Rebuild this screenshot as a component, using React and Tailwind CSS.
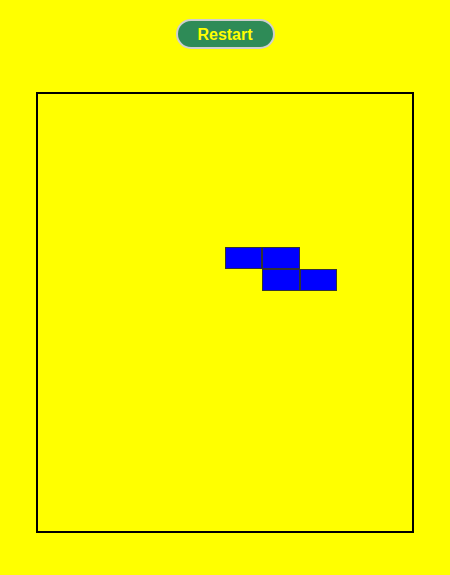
import React from "react";

const ROWS = 20;
const COLS = 10;

// active piece (Z shape)
const piece = [
  [7, 5],
  [7, 6],
  [8, 6],
  [8, 7],
];

const App = () => {
  const filled = new Set(piece.map(([r, c]) => r * COLS + c));
  const cells = [];
  for (let i = 0; i < ROWS * COLS; i++) {
    cells.push(
      <div
        key={i}
        className={filled.has(i) ? "bg-[#0000ff] border border-[#333333]" : ""}
      />
    );
  }

  return (
    <div
      className="min-h-screen bg-[#ffff00] flex flex-col items-center pt-[19px]"
      style={{ fontFamily: '"Liberation Sans", Arial, sans-serif' }}
    >
      <button className="w-[99px] h-[30px] pt-[2px] rounded-full bg-[#2e8b57] border-2 border-[#cfcfcf] text-[#ffff00] font-bold text-base leading-none">
        Restart
      </button>
      <div className="mt-[43px] w-[378px] h-[441px] border-2 border-black grid grid-cols-10 grid-rows-20">
        {cells}
      </div>
    </div>
  );
};

export default App;
